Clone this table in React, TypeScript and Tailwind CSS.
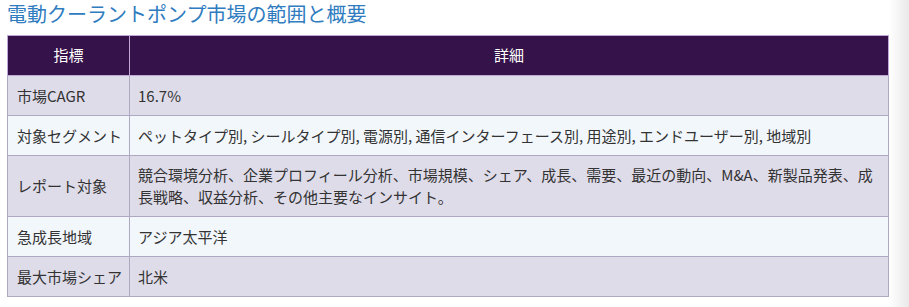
const rows: { label: string; value: string }[] = [
  { label: "市場CAGR", value: "16.7%" },
  {
    label: "対象セグメント",
    value:
      "ペットタイプ別, シールタイプ別, 電源別, 通信インターフェース別, 用途別, エンドユーザー別, 地域別",
  },
  {
    label: "レポート対象",
    value:
      "競合環境分析、企業プロフィール分析、市場規模、シェア、成長、需要、最近の動向、M&A、新製品発表、成長戦略、収益分析、その他主要なインサイト。",
  },
  { label: "急成長地域", value: "アジア太平洋" },
  { label: "最大市場シェア", value: "北米" },
];

export default function App() {
  return (
    <div
      className="flex h-[307px] w-full overflow-hidden bg-white"
      style={{ fontFamily: '"Noto Sans CJK JP", "Noto Sans", sans-serif' }}
    >
      <div className="flex-1 pl-[7px]">
        <h2 className="h-[35px] pt-[1px] text-[20px] leading-[26px] text-[#2f7cc0]">
          電動クーラントポンプ市場の範囲と概要
        </h2>
        <table className="w-[882px] table-fixed border-collapse text-[15px] text-[#333]">
          <colgroup>
            <col className="w-[122px]" />
            <col />
          </colgroup>
          <thead>
            <tr className="h-[40px] bg-[#36124a] text-white">
              <th className="border border-[#bfa8d6] font-normal">指標</th>
              <th className="border border-[#bfa8d6] font-normal">詳細</th>
            </tr>
          </thead>
          <tbody>
            {rows.map((row, i) => (
              <tr
                key={row.label}
                className={i % 2 === 0 ? "bg-[#dfdcea]" : "bg-[#f2f7fc]"}
              >
                <td className="h-[40px] whitespace-nowrap border border-[#afa8c2] px-[9px] leading-[22px]">
                  {row.label}
                </td>
                <td className="border border-[#afa8c2] px-[8px] py-[8px] leading-[22px]">
                  {row.value}
                </td>
              </tr>
            ))}
          </tbody>
        </table>
      </div>
      <div className="w-[20px] bg-gradient-to-r from-white to-[#e9e9e9]" />
    </div>
  );
}
